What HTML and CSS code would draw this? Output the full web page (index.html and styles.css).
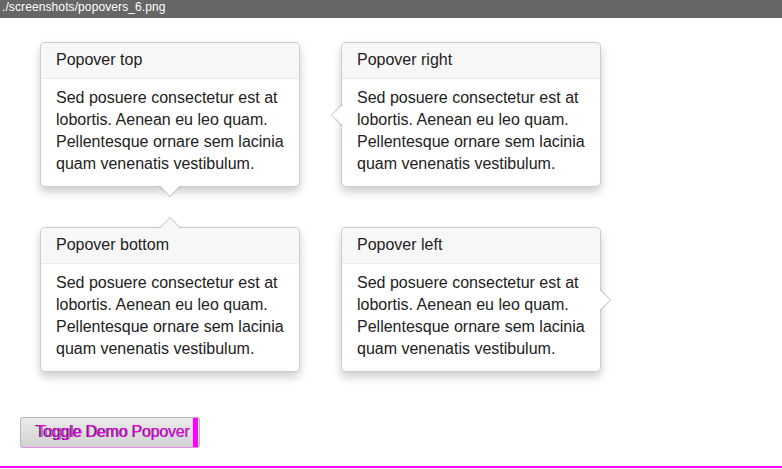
FILE: index.html
```html
<!DOCTYPE html>
<html>
<head>
<meta charset="utf-8">
<link rel="stylesheet" href="styles.css">
</head>
<body>
<div class="topbar">./screenshots/popovers_6.png</div>
<main class="page">
  <div class="grid">
    <div class="popover top">
      <h3 class="popover-title">Popover top</h3>
      <div class="popover-content">Sed posuere consectetur est at lobortis. Aenean eu leo quam. Pellentesque ornare sem lacinia quam venenatis vestibulum.</div>
    </div>
    <div class="popover right">
      <h3 class="popover-title">Popover right</h3>
      <div class="popover-content">Sed posuere consectetur est at lobortis. Aenean eu leo quam. Pellentesque ornare sem lacinia quam venenatis vestibulum.</div>
    </div>
    <div class="popover bottom">
      <h3 class="popover-title">Popover bottom</h3>
      <div class="popover-content">Sed posuere consectetur est at lobortis. Aenean eu leo quam. Pellentesque ornare sem lacinia quam venenatis vestibulum.</div>
    </div>
    <div class="popover left">
      <h3 class="popover-title">Popover left</h3>
      <div class="popover-content">Sed posuere consectetur est at lobortis. Aenean eu leo quam. Pellentesque ornare sem lacinia quam venenatis vestibulum.</div>
    </div>
  </div>
  <button class="btn"><span class="btn-label">Toggle Demo Popover</span><span class="btn-ghost">Toggle Demo Popover</span><span class="btn-edge"></span></button>
</main>
<div class="diffline"></div>
</body>
</html>
```
FILE: styles.css
```css
* { box-sizing: border-box; }
html, body { margin: 0; padding: 0; background: #fff; }
body {
  font-family: "Liberation Sans", Arial, sans-serif;
  color: #333;
  width: 782px;
  height: 469px;
  overflow: hidden;
  position: relative;
}
.topbar {
  height: 18px;
  background: #666;
  color: #fff;
  font-size: 12px;
  line-height: 15px;
  padding-left: 2px;
  letter-spacing: 0.1px;
}
.page {
  padding: 24px 20px 0 20px;
}
.grid {
  display: grid;
  grid-template-columns: 260px 260px;
  column-gap: 41px;
  row-gap: 40px;
  margin-left: 20px;
}
.popover {
  position: relative;
  width: 260px;
  height: 145px;
  background: #fff;
  border: 1px solid rgba(0,0,0,.2);
  border-radius: 5px;
  box-shadow: 0 5px 10px rgba(0,0,0,.2);
}
.popover-title {
  margin: 0;
  padding: 8px 15px 9px;
  font-size: 16px;
  font-weight: normal;
  line-height: 18px;
  background: #f7f7f7;
  border-bottom: 1px solid #ebebeb;
  border-radius: 5px 5px 0 0;
  color: #222;
}
.popover-content {
  padding: 8px 15px 9px;
  font-size: 16px;
  line-height: 22px;
  color: #222;
}
.popover::before, .popover::after {
  content: "";
  position: absolute;
  width: 0;
  height: 0;
  border: solid transparent;
}
.popover::before { border-width: 11px; }
.popover::after { border-width: 10px; }

.popover.top::before { bottom: -11px; left: 50%; margin-left: -11px; border-bottom-width: 0; border-top-color: rgba(0,0,0,.25); }
.popover.top::after { bottom: -10px; left: 50%; margin-left: -10px; border-bottom-width: 0; border-top-color: #fff; }

.popover.right::before { left: -11px; top: 50%; margin-top: -11px; border-left-width: 0; border-right-color: rgba(0,0,0,.25); }
.popover.right::after { left: -10px; top: 50%; margin-top: -10px; border-left-width: 0; border-right-color: #fff; }

.popover.bottom::before { top: -11px; left: 50%; margin-left: -11px; border-top-width: 0; border-bottom-color: rgba(0,0,0,.25); }
.popover.bottom::after { top: -10px; left: 50%; margin-left: -10px; border-top-width: 0; border-bottom-color: #f7f7f7; }

.popover.left::before { right: -11px; top: 50%; margin-top: -11px; border-right-width: 0; border-left-color: rgba(0,0,0,.25); }
.popover.left::after { right: -10px; top: 50%; margin-top: -10px; border-right-width: 0; border-left-color: #fff; }

.btn {
  position: relative;
  display: block;
  margin-top: 45px;
  width: 180px;
  height: 31px;
  padding: 0;
  border: 1px solid #b8b8b8;
  border-bottom-color: #e08ee0;
  border-radius: 3px;
  background: linear-gradient(#ebebeb, #d2d2d2);
  font-family: "Liberation Sans", Arial, sans-serif;
  font-size: 16px;
  text-align: left;
}
.btn-label {
  position: absolute;
  left: 14px;
  top: 5px;
  color: #333;
  letter-spacing: -0.2px;
}
.btn-ghost {
  position: absolute;
  left: 16px;
  top: 5px;
  color: #ff00ff;
  letter-spacing: -0.3px;
  opacity: .85;
}
.btn-edge {
  position: absolute;
  right: 1px;
  top: 0;
  width: 5px;
  height: 29px;
  background: #ff00ff;
}
.diffline {
  position: absolute;
  left: 0;
  top: 466px;
  width: 782px;
  height: 2px;
  background: #ff00ff;
}
```
